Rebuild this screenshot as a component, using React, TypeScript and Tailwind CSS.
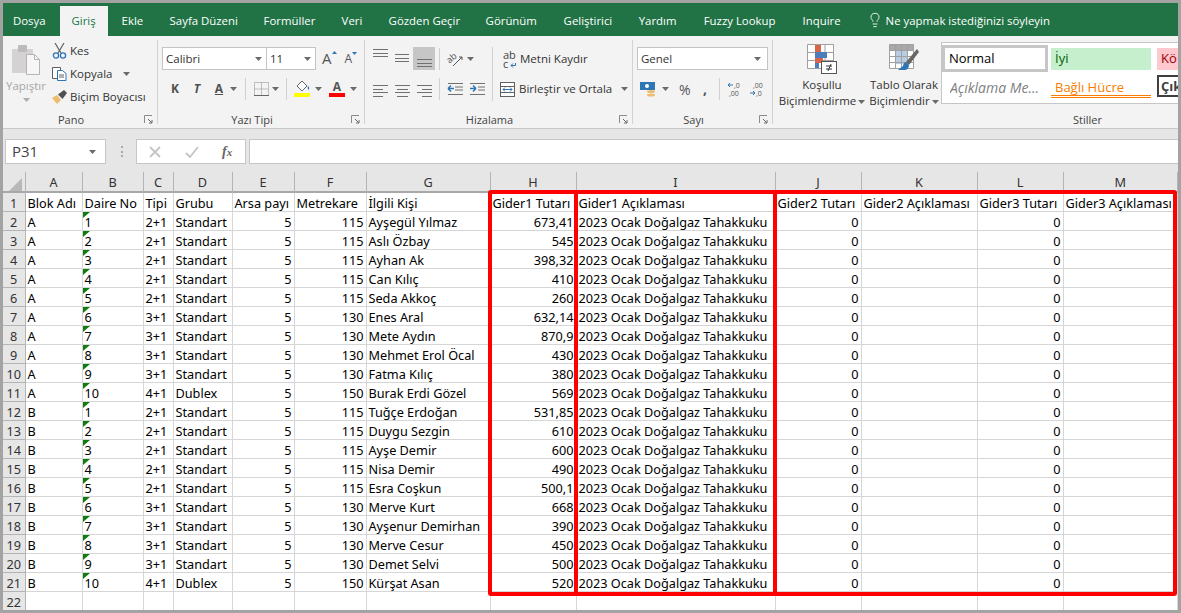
import React from "react";
import { Lightbulb } from "lucide-react";

const GRID = "grid grid-cols-[22.5px_57px_61px_30px_59px_62px_72px_124px_86px_199px_86px_116px_86px_1fr]";
const UI = "font-['Open_Sans',sans-serif]";

const people: [string, string, string, string, string, string, string][] = [
  ["A", "1", "2+1", "Standart", "115", "Ayşegül Yılmaz", "673,41"],
  ["A", "2", "2+1", "Standart", "115", "Aslı Özbay", "545"],
  ["A", "3", "2+1", "Standart", "115", "Ayhan Ak", "398,32"],
  ["A", "4", "2+1", "Standart", "115", "Can Kılıç", "410"],
  ["A", "5", "2+1", "Standart", "115", "Seda Akkoç", "260"],
  ["A", "6", "3+1", "Standart", "130", "Enes Aral", "632,14"],
  ["A", "7", "3+1", "Standart", "130", "Mete Aydın", "870,9"],
  ["A", "8", "3+1", "Standart", "130", "Mehmet Erol Öcal", "430"],
  ["A", "9", "3+1", "Standart", "130", "Fatma Kılıç", "380"],
  ["A", "10", "4+1", "Dublex", "150", "Burak Erdi Gözel", "569"],
  ["B", "1", "2+1", "Standart", "115", "Tuğçe Erdoğan", "531,85"],
  ["B", "2", "2+1", "Standart", "115", "Duygu Sezgin", "610"],
  ["B", "3", "2+1", "Standart", "115", "Ayşe Demir", "600"],
  ["B", "4", "2+1", "Standart", "115", "Nisa Demir", "490"],
  ["B", "5", "2+1", "Standart", "115", "Esra Coşkun", "500,1"],
  ["B", "6", "3+1", "Standart", "130", "Merve Kurt", "668"],
  ["B", "7", "3+1", "Standart", "130", "Ayşenur Demirhan", "390"],
  ["B", "8", "3+1", "Standart", "130", "Merve Cesur", "450"],
  ["B", "9", "3+1", "Standart", "130", "Demet Selvi", "500"],
  ["B", "10", "4+1", "Dublex", "150", "Kürşat Asan", "520"],
];

const Caret = ({ className = "" }: { className?: string }) => (
  <svg width="7" height="4" viewBox="0 0 7 4" className={className}>
    <path d="M0 0h7L3.5 4z" fill="#6a6a6a" />
  </svg>
);

const Launcher = () => (
  <svg width="9" height="9" viewBox="0 0 9 9" className="justify-self-end mr-[4px]">
    <path d="M.5 8V.5H8" fill="none" stroke="#8a8a8a" />
    <path d="M4 4l4 4M8 5v3H5" fill="none" stroke="#6a6a6a" />
  </svg>
);

const Sep = () => <div className="w-px h-[22px] bg-[#d0d0d0]" />;

function Group({ w, label, children, last }: { w: string; label: string; children: React.ReactNode; last?: boolean }) {
  return (
    <div className={`${w} h-[84px] mt-[4px] flex flex-col shrink-0 ${last ? "" : "border-r border-[#d2d2d2]"}`}>
      <div className="h-[75px]">{children}</div>
      <div className="h-[9px] grid grid-cols-[1fr_auto_1fr] items-center">
        <span />
        <span className={`text-[11px] leading-[9px] text-[#444] ${last ? "ml-[224px]" : "mr-[18px]"}`}>{label}</span>
        {last ? <span /> : <Launcher />}
      </div>
    </div>
  );
}

const Cell = ({ children, right, tri }: { children?: React.ReactNode; right?: boolean; tri?: boolean }) => (
  <div className={`relative h-[19px] border-r border-b border-[#d6d6d6] px-[2px] text-[12.7px] leading-[21px] text-black whitespace-nowrap ${right ? "text-right" : ""}`}>
    {tri && (
      <svg width="7" height="6" viewBox="0 0 7 6" className="absolute left-0 top-0">
        <path d="M0 0h7L0 6z" fill="#107c10" />
      </svg>
    )}
    {children}
  </div>
);

const RowHead = ({ n }: { n: number }) => (
  <div className="h-[19px] bg-[#e6e6e6] border-r border-b border-[#b4b4b4] text-center text-[12.7px] leading-[20px] text-[#333]">{n}</div>
);

// Alignment glyph: horizontal rules with given extents, starting at a given y
const Lines = ({ rows, y = 1.5, gap = 3.5 }: { rows: [number, number][]; y?: number; gap?: number }) => (
  <svg width="15" height="15" viewBox="0 0 15 15" className="shrink-0">
    {rows.map(([x1, x2], i) => (
      <path key={i} d={`M${x1} ${Math.round(y + i * gap) + 0.5}H${x2}`} stroke="#707070" strokeWidth="1" />
    ))}
  </svg>
);

const tabs: [string, string][] = [
  ["Ekle", "w-[21px]"],
  ["Sayfa Düzeni", "w-[67px]"],
  ["Formüller", "w-[51px]"],
  ["Veri", "w-[20px]"],
  ["Gözden Geçir", "w-[70px]"],
  ["Görünüm", "w-[51px]"],
  ["Geliştirici", "w-[48px]"],
  ["Yardım", "w-[38px]"],
  ["Fuzzy Lookup", "w-[72px]"],
  ["Inquire", "w-[37px]"],
];

export default function App() {
  return (
    <div className={`w-[1181px] h-[613px] bg-[#a3a3a3] px-[3px] pt-[3px] pb-[3px] overflow-hidden ${UI}`}>
      <div className="w-[1175px] h-[607px] bg-white flex flex-col overflow-hidden">
        {/* Tabs */}
        <div className="h-[33px] bg-[#217346] flex items-end text-white text-[11.4px] shrink-0">
          <span className="h-[30px] leading-[29px] ml-[10px]">Dosya</span>
          <span className="h-[30px] w-[48px] ml-[14px] bg-[#f3f3f3] text-[#217346] text-center leading-[29px]">Giriş</span>
          <div className="flex ml-[14px] gap-[27px]">
            {tabs.map(([t, w]) => (
              <span key={t} className={`h-[30px] leading-[29px] text-center whitespace-nowrap ${w}`}>{t}</span>
            ))}
          </div>
          <Lightbulb size={16} strokeWidth={1.3} className="ml-[27px] mb-[8px] shrink-0" />
          <span className="h-[30px] leading-[29px] ml-[3px] whitespace-nowrap">Ne yapmak istediğinizi söyleyin</span>
        </div>

        {/* Ribbon */}
        <div className="h-[93px] bg-[#f3f3f3] border-b border-[#c8c8c8] flex text-[11.5px] text-[#333] shrink-0 overflow-hidden">
          {/* Pano */}
          <Group w="w-[155px]" label="Pano">
            <div className="flex h-full">
              <div className="w-[40px] ml-[3px] flex flex-col items-center text-[#a6a6a6]">
                <svg width="30" height="32" viewBox="0 0 30 32" className="mt-[4px]">
                  <rect x="1" y="5" width="21" height="24" rx="1" fill="#d4d2d2" />
                  <rect x="7" y="1" width="9" height="7" rx="1" fill="#bdbbbb" />
                  <path d="M15.5 10.5h8l5 5v15h-13z" fill="#f6f6f6" stroke="#b4b4b4" />
                  <path d="M23.5 10.5v5h5" fill="none" stroke="#b4b4b4" />
                </svg>
                <span className="mt-[2px] leading-[15px]">Yapıştır</span>
                <Caret className="mt-[5px] opacity-50" />
              </div>
              <div className="ml-[6px] -mt-[1px] flex flex-col">
                <div className="h-[23px] flex items-center gap-[3px]">
                  <svg width="15" height="16" viewBox="0 0 15 16">
                    <path d="M3 0l6 10M12 0L6 10" stroke="#5f5f5f" strokeWidth="1.2" fill="none" />
                    <circle cx="4" cy="12.5" r="2.6" fill="none" stroke="#2e75b6" strokeWidth="1.3" />
                    <circle cx="11" cy="12.5" r="2.6" fill="none" stroke="#2e75b6" strokeWidth="1.3" />
                  </svg>
                  <span>Kes</span>
                </div>
                <div className="h-[23px] flex items-center gap-[3px]">
                  <svg width="15" height="15" viewBox="0 0 15 15">
                    <path d="M.5 1.5h8v11h-8z" fill="#fff" stroke="#606060" />
                    <path d="M5.5 4.5h5l3.5 3v7h-8.500z" fill="#fff" stroke="#2e75b6" />
                    <path d="M7 9h5M7 11h5" stroke="#606060" />
                  </svg>
                  <span>Kopyala</span>
                  <Caret className="ml-[8px]" />
                </div>
                <div className="h-[23px] flex items-center gap-[3px]">
                  <svg width="15" height="14" viewBox="0 0 15 14">
                    <path d="M0 8l5-3 4 5-4 4z" fill="#eebc6e" />
                    <path d="M6 4.500L12 0l3 3-4.500 6z" fill="#505050" />
                  </svg>
                  <span className="whitespace-nowrap">Biçim Boyacısı</span>
                </div>
              </div>
            </div>
          </Group>

          {/* Yazı Tipi */}
          <Group w="w-[207px]" label="Yazı Tipi">
            <div className="pl-[4px] pt-[7px] flex items-center h-[30px]">
              <div className="w-[105px] h-[23px] bg-white border border-[#c4c4c4] flex items-center justify-between px-[3px]">
                <span>Calibri</span><Caret className="mr-[1px]" />
              </div>
              <div className="w-[49px] h-[23px] bg-white border border-[#c4c4c4] border-l-0 flex items-center justify-between px-[3px]">
                <span>11</span><Caret className="mr-[1px]" />
              </div>
              <span className="ml-[6px] text-[15px] text-[#555] leading-none relative">A<svg width="5" height="3" className="absolute -right-[5px] top-0"><path d="M0 3h5L2.500 0z" fill="#2e75b6" /></svg></span>
              <span className="ml-[13px] text-[12px] text-[#555] leading-none relative">A<svg width="5" height="3" className="absolute -right-[5px] -top-[1px]"><path d="M0 0h5L2.500 3z" fill="#2e75b6" /></svg></span>
            </div>
            <div className="pl-[9px] mt-[8px] h-[22px] flex items-center text-[#505050]">
              <span className="w-[16px] text-center font-bold text-[12px]">K</span>
              <span className="w-[16px] ml-[6px] text-center font-bold italic text-[12px]">T</span>
              <span className="w-[16px] ml-[6px] text-center font-bold text-[12px] underline">A</span>
              <Caret className="ml-[3px]" />
              <div className="ml-[8px]"><Sep /></div>
              <svg width="15" height="14" viewBox="0 0 15 14" className="ml-[8px]">
                <path d="M.5.5h14v13H.5zM7.500.5v13M.5 7h14" fill="none" stroke="#8a8a8a" strokeDasharray="1 1" />
                <path d="M0 13.500h15" stroke="#666" />
              </svg>
              <Caret className="ml-[3px]" />
              <div className="ml-[7px]"><Sep /></div>
              <div className="ml-[7px] w-[16px] flex flex-col items-center">
                <svg width="16" height="11" viewBox="0 0 16 11">
                  <path d="M3 5l5-5 5 5-5 5z" fill="#fff" stroke="#666" />
                  <path d="M14 5c1.500 1 1.500 3 .5 4-1-1-1-3-.5-4z" fill="#2e75b6" />
                </svg>
                <div className="w-[16px] h-[4px] bg-[#ffff00] mt-[1px]" />
              </div>
              <Caret className="ml-[5px]" />
              <div className="ml-[7px] w-[16px] flex flex-col items-center">
                <span className="text-[12px] leading-[12px] font-bold text-[#555]">A</span>
                <div className="w-[16px] h-[4px] bg-[#ff0000]" />
              </div>
              <Caret className="ml-[5px]" />
            </div>
          </Group>

          {/* Hizalama */}
          <Group w="w-[268px]" label="Hizalama">
            <div className="pl-[8px] pt-[7px] h-[30px] flex items-center">
              <div className="self-start"><Lines y={2} rows={[[0, 15], [0, 15], [0, 15]]} /></div>
              <div className="ml-[7px] self-start"><Lines y={7} rows={[[0, 14], [0, 14], [0, 14]]} /></div>
              <div className="ml-[3px] w-[22px] h-[23px] bg-[#c6c6c6] flex items-end justify-center pb-[1px]"><Lines y={5} rows={[[0, 15], [0, 15], [0, 15]]} /></div>
              <div className="ml-[4px]"><Sep /></div>
              <svg width="17" height="16" viewBox="0 0 17 16" className="ml-[7px] overflow-visible">
                <text x="0" y="10" fontSize="9" fill="#555" transform="rotate(-40 5 8)">ab</text>
                <path d="M6 15l9-9M15 6h-3M15 6v3" stroke="#555" fill="none" />
              </svg>
              <Caret className="ml-[3px]" />
              <div className="ml-[18px] self-start h-[54px] w-px bg-[#d0d0d0]" />
              <div className="ml-[10px] w-[13px] text-[11px] leading-[9px] text-[#444] relative">ab<br />c<svg width="6" height="5" className="absolute right-0 bottom-0"><path d="M5.500 0v2.500H1M1 2.500l2-2M1 2.500l2 2" stroke="#2e75b6" fill="none" /></svg></div>
              <span className="ml-[4px] whitespace-nowrap">Metni Kaydır</span>
            </div>
            <div className="pl-[8px] mt-[8px] h-[22px] flex items-center">
              <Lines y={3} rows={[[0, 15], [0, 10], [0, 15], [0, 10]]} />
              <div className="ml-[7px]"><Lines y={3} rows={[[0, 15], [2, 13], [0, 15], [2, 13]]} /></div>
              <div className="ml-[7px]"><Lines y={3} rows={[[0, 15], [5, 15], [0, 15], [5, 15]]} /></div>
              <div className="ml-[7px]"><Sep /></div>
              <svg width="16" height="14" viewBox="0 0 16 14" className="ml-[7px]">
                <path d="M1 6.500h6M1 6.500l3-3M1 6.500l3 3" stroke="#2e75b6" strokeWidth="1.500" fill="none" />
                <path d="M1 1.500h15M8 5h8M8 8h8M1 12.500h15" stroke="#707070" />
              </svg>
              <svg width="16" height="14" viewBox="0 0 16 14" className="ml-[6px]">
                <path d="M1 6.500h6M7 6.500l-3-3M7 6.500l-3 3" stroke="#2e75b6" strokeWidth="1.500" fill="none" />
                <path d="M1 1.500h15M9 5h7M9 8h7M1 12.500h15" stroke="#707070" />
              </svg>
              <svg width="15" height="15" viewBox="0 0 15 15" className="ml-[15px]">
                <rect x=".5" y=".5" width="14" height="14" fill="#fff" stroke="#606060" />
                <path d="M.5 4.500h14M.5 10.500h14" stroke="#606060" />
                <path d="M3 7.500h9M3 7.500l2-2M3 7.500l2 2M12 7.500l-2-2M12 7.500l-2 2" stroke="#2e75b6" fill="none" />
              </svg>
              <span className="ml-[4px] whitespace-nowrap">Birleştir ve Ortala</span>
              <Caret className="ml-[9px]" />
            </div>
          </Group>

          {/* Sayı */}
          <Group w="w-[140px]" label="Sayı">
            <div className="pl-[4px] pt-[7px] h-[30px] flex items-center">
              <div className="w-[131px] h-[23px] bg-white border border-[#c4c4c4] flex items-center justify-between px-[3px]">
                <span>Genel</span><Caret className="mr-[3px]" />
              </div>
            </div>
            <div className="pl-[7px] mt-[8px] h-[22px] flex items-center">
              <svg width="16" height="16" viewBox="0 0 16 16">
                <rect x="0" y="1" width="15" height="8" fill="#2e75b6" />
                <circle cx="7" cy="5" r="2" fill="#fff" />
                <ellipse cx="11" cy="10.500" rx="4" ry="1.500" fill="#eebc6e" />
                <ellipse cx="11" cy="14" rx="4" ry="1.500" fill="#eebc6e" />
              </svg>
              <Caret className="ml-[6px]" />
              <span className="ml-[10px] w-[14px] text-[14px] text-[#555]">%</span>
              <span className="ml-[10px] w-[6px] font-bold text-[14px] text-[#555] leading-[14px]">,</span>
              <div className="ml-[10px]"><Sep /></div>
              <svg width="16" height="16" viewBox="0 0 16 16" className="ml-[7px]">
                <path d="M1 4h5M1 4l2-2M1 4l2 2" stroke="#2e75b6" fill="none" />
                <text x="7" y="7" fontSize="7" fill="#555">,0</text>
                <text x="2" y="15" fontSize="7" fill="#555">,00</text>
              </svg>
              <svg width="16" height="16" viewBox="0 0 16 16" className="ml-[6px]">
                <text x="4" y="7" fontSize="7" fill="#555">,00</text>
                <path d="M1 12h5M6 12l-2-2M6 12l-2 2" stroke="#2e75b6" fill="none" />
                <text x="7" y="15" fontSize="7" fill="#555">,0</text>
              </svg>
            </div>
          </Group>

          {/* Stiller */}
          <Group w="flex-1 min-w-0" label="Stiller" last>
            <div className="flex h-full">
              <div className="w-[88px] ml-[5px] flex flex-col items-center">
                <svg width="30" height="30" viewBox="0 0 30 30" className="mt-[4px]">
                  <path d="M.5.5h26v24H.5zM.5 8.500h26M.5 16.500h26M9.500.5v24M18 .5v24" fill="#fff" stroke="#a0a0a0" />
                  <rect x="8" y="1" width="6" height="7" fill="#d8654a" />
                  <rect x="8" y="8" width="12" height="6" fill="#4a7ebb" />
                  <rect x="8" y="14" width="8" height="5" fill="#d8654a" />
                  <rect x="8" y="19" width="4" height="5" fill="#4a7ebb" />
                  <rect x="14.500" y="17.500" width="15" height="12" fill="#fff" stroke="#555" />
                  <path d="M19 22h6M19 25h6M24 20l-3 7" stroke="#333" fill="none" />
                </svg>
                <span className="mt-[3px] leading-[16px]">Koşullu</span>
                <span className="leading-[16px] whitespace-nowrap">Biçimlendirme<Caret className="inline ml-[2px] align-middle" /></span>
              </div>
              <div className="w-[76px] flex flex-col items-center">
                <svg width="30" height="30" viewBox="0 0 30 30" className="mt-[4px]">
                  <path d="M.5.5h24v24H.5z" fill="#fff" stroke="#a0a0a0" />
                  <rect x="1" y="1" width="23" height="5" fill="#a9a9a9" />
                  <rect x="7" y="6" width="12" height="14" fill="#b8cce4" />
                  <path d="M.5 6.500h24M.5 12.500h24M.5 18.500h24M6.500.5v24M12.500.5v24M18.500.5v24" stroke="#a0a0a0" fill="none" />
                  <path d="M28 5L17 18l3 3L30 8z" fill="#666" />
                  <path d="M17 18c-2 0-3 3-3 4l-5 4h6c3 0 5-2 5-5z" fill="#2e75b6" />
                </svg>
                <span className="mt-[3px] leading-[16px] whitespace-nowrap">Tablo Olarak</span>
                <span className="leading-[16px] whitespace-nowrap">Biçimlendir<Caret className="inline ml-[2px] align-middle" /></span>
              </div>
              <div className="-ml-[1px] mt-[2px] h-[62px] flex-1 min-w-0 bg-white border border-[#c6c6c6] border-r-0 overflow-hidden text-[13px]">
                <div className="flex h-[31px] pt-[2px]">
                  <div className="w-[106px] shrink-0 h-[27px] border-[3px] border-[#c6c6c6] px-[4px] leading-[21px] text-black">Normal</div>
                  <div className="ml-[3px] mt-[3px] w-[100px] shrink-0 h-[22px] bg-[#c6efce] text-[#006100] px-[4px] leading-[21px]">İyi</div>
                  <div className="ml-[6px] mt-[3px] flex-1 h-[22px] bg-[#ffc7ce] text-[#9c0006] px-[4px] leading-[21px] overflow-hidden">Kö</div>
                </div>
                <div className="flex h-[29px]">
                  <div className="ml-[8px] w-[101px] shrink-0 leading-[27px] text-[14px] italic text-[#7f7f7f] whitespace-nowrap overflow-hidden">Açıklama Me...</div>
                  <div className="w-[100px] shrink-0 h-[24px] border-b-[3px] border-double border-[#fa7d00] text-[#fa7d00] leading-[26px] px-[4px]">Bağlı Hücre</div>
                  <div className="ml-[6px] flex-1 h-[22px] border-2 border-r-0 border-[#3f3f3f] font-bold text-[#3f3f3f] px-[2px] leading-[18px] mt-[1px] overflow-hidden">Çık</div>
                </div>
              </div>
            </div>
          </Group>
        </div>

        {/* Formula bar */}
        <div className="h-[43px] bg-[#e6e6e6] flex items-start pt-[10px] shrink-0">
          <div className="ml-[2px] w-[101px] h-[25px] bg-white border border-[#c6c6c6] flex items-center justify-between px-[6px] text-[15px] text-[#444]">
            <span>P31</span><Caret className="mr-[3px]" />
          </div>
          <div className="ml-[15px] w-[2px] h-[11px] mt-[7px] border-l-2 border-dotted border-[#a8a8a8]" />
          <div className="ml-[13px] w-[110px] h-[25px] bg-white border border-[#c6c6c6] flex items-center">
            <svg width="12" height="12" viewBox="0 0 12 12" className="ml-[12px]"><path d="M1 1l10 10M11 1L1 11" stroke="#c4c4c4" strokeWidth="1.800" /></svg>
            <svg width="14" height="12" viewBox="0 0 14 12" className="ml-[24px]"><path d="M1 7l4 4 8-10" fill="none" stroke="#c4c4c4" strokeWidth="1.800" /></svg>
            <span className="ml-[23px] text-[14px] italic font-bold text-[#666] font-['Liberation_Serif',serif]">f<span className="text-[11px]">x</span></span>
          </div>
          <div className="ml-[3px] flex-1 h-[25px] bg-white border border-[#c6c6c6] border-r-0" />
        </div>

        {/* Sheet */}
        <div className="relative flex-1 overflow-hidden font-['Noto_Sans',sans-serif]">
          <div className={`${GRID} h-[21px] bg-[#e6e6e6] border-b-2 border-[#a8a8a8]`}>
            <div className="border-r border-[#b4b4b4] flex items-end justify-end pr-[3px] pb-[2px]">
              <svg width="13" height="13" viewBox="0 0 13 13"><path d="M13 0v13H0z" fill="#b8b8b8" /></svg>
            </div>
            {["A", "B", "C", "D", "E", "F", "G", "H", "I", "J", "K", "L", "M"].map((c) => (
              <div key={c} className="border-r border-[#b4b4b4] text-center text-[12.7px] leading-[21px] text-[#333]">{c}</div>
            ))}
          </div>
          <div className={GRID}>
            <RowHead n={1} />
            <Cell>Blok Adı</Cell>
            <Cell>Daire No</Cell>
            <Cell>Tipi</Cell>
            <Cell>Grubu</Cell>
            <Cell>Arsa payı</Cell>
            <Cell>Metrekare</Cell>
            <Cell>İlgili Kişi</Cell>
            <Cell>Gider1 Tutarı</Cell>
            <Cell>Gider1 Açıklaması</Cell>
            <Cell>Gider2 Tutarı</Cell>
            <Cell>Gider2 Açıklaması</Cell>
            <Cell>Gider3 Tutarı</Cell>
            <Cell>Gider3 Açıklaması</Cell>
            {people.map((p, i) => (
              <React.Fragment key={i}>
                <RowHead n={i + 2} />
                <Cell>{p[0]}</Cell>
                <Cell tri>{p[1]}</Cell>
                <Cell>{p[2]}</Cell>
                <Cell>{p[3]}</Cell>
                <Cell right>5</Cell>
                <Cell right>{p[4]}</Cell>
                <Cell>{p[5]}</Cell>
                <Cell right>{p[6]}</Cell>
                <Cell>2023 Ocak Doğalgaz Tahakkuku</Cell>
                <Cell right>0</Cell>
                <Cell />
                <Cell right>0</Cell>
                <Cell />
              </React.Fragment>
            ))}
            <RowHead n={22} />
            {Array.from({ length: 13 }).map((_, i) => (
              <Cell key={i} />
            ))}
          </div>
          {/* Red highlight frames */}
          <div className="absolute left-[485px] top-[18px] w-[90px] h-[406px] border-4 border-[#ff0000] rounded-[3px]" />
          <div className="absolute left-[571px] top-[18px] w-[203px] h-[406px] border-4 border-[#ff0000] rounded-[3px]" />
          <div className="absolute left-[770px] top-[18px] w-[404px] h-[406px] border-4 border-[#ff0000] rounded-[3px]" />
        </div>
      </div>
    </div>
  );
}
